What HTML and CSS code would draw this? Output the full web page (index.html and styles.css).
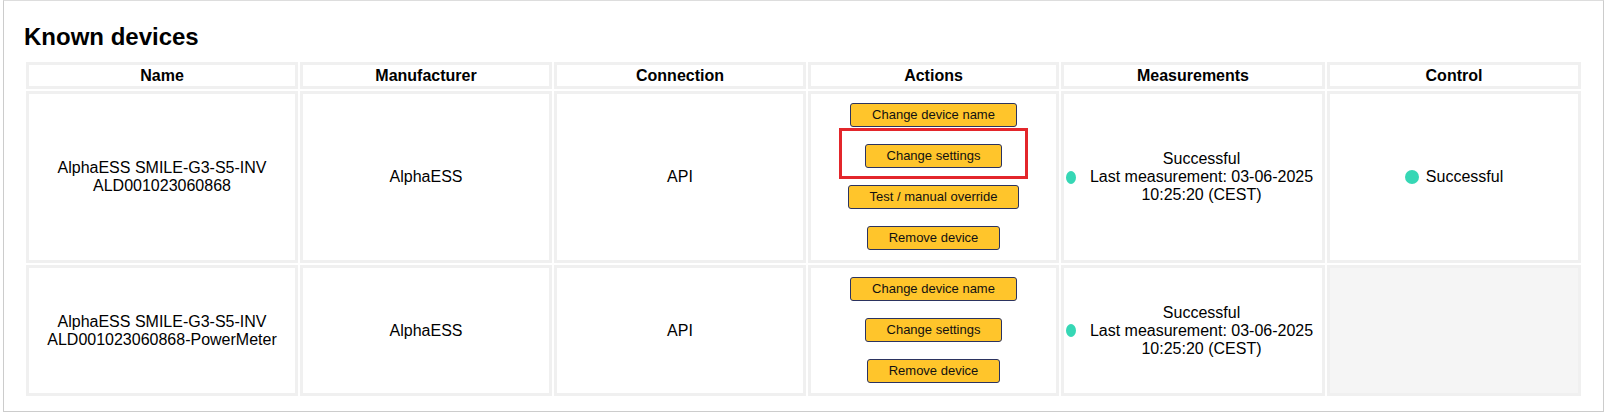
FILE: index.html
```html
<!DOCTYPE html>
<html lang="en">
<head>
<meta charset="utf-8">
<title>Known devices</title>
<link rel="stylesheet" href="styles.css">
</head>
<body>
<div class="panel">
  <h2 class="title">Known devices</h2>
  <table class="devices">
    <thead>
      <tr>
        <th class="c-name">Name</th>
        <th class="c-man">Manufacturer</th>
        <th class="c-conn">Connection</th>
        <th class="c-act">Actions</th>
        <th class="c-meas">Measurements</th>
        <th class="c-ctrl">Control</th>
      </tr>
    </thead>
    <tbody>
      <tr class="row-1">
        <td>AlphaESS SMILE-G3-S5-INV<br>ALD001023060868</td>
        <td>AlphaESS</td>
        <td>API</td>
        <td>
          <div class="actions">
            <button class="btn">Change device name</button>
            <span class="highlight"><button class="btn">Change settings</button></span>
            <button class="btn">Test / manual override</button>
            <button class="btn">Remove device</button>
          </div>
        </td>
        <td>
          <div class="meas">
            <span class="dot dot-narrow"></span>
            <div class="meas-text">
              <div>Successful</div>
              <div>Last measurement: 03-06-2025</div>
              <div>10:25:20 (CEST)</div>
            </div>
          </div>
        </td>
        <td>
          <div class="ctrl"><span class="dot"></span><span>Successful</span></div>
        </td>
      </tr>
      <tr class="row-2">
        <td>AlphaESS SMILE-G3-S5-INV<br>ALD001023060868-PowerMeter</td>
        <td>AlphaESS</td>
        <td>API</td>
        <td>
          <div class="actions">
            <button class="btn">Change device name</button>
            <button class="btn">Change settings</button>
            <button class="btn">Remove device</button>
          </div>
        </td>
        <td>
          <div class="meas">
            <span class="dot dot-narrow"></span>
            <div class="meas-text">
              <div>Successful</div>
              <div>Last measurement: 03-06-2025</div>
              <div>10:25:20 (CEST)</div>
            </div>
          </div>
        </td>
        <td class="empty"></td>
      </tr>
    </tbody>
  </table>
</div>
</body>
</html>
```

FILE: styles.css
```css
html, body {
  margin: 0;
  padding: 0;
  background: #ffffff;
}

body {
  font-family: "Liberation Sans", Arial, sans-serif;
  color: #000000;
}

.panel {
  margin: 0 3px;
  border: 1px solid #cccccc;
  border-top-color: #dddddd;
  padding: 22px 20px 11px 20px;
  height: 377px;
}

.title {
  margin: 0 0 9px 0;
  font-size: 24px;
  line-height: 28px;
  font-weight: bold;
}

.devices {
  width: 1559px;
  table-layout: fixed;
  border-collapse: separate;
  border-spacing: 2px;
}

.devices th,
.devices td {
  box-sizing: border-box;
  border: 3px solid #f0f0f0;
  padding: 1px;
  text-align: center;
  vertical-align: middle;
}

.devices th {
  font-size: 16px;
  line-height: 19px;
  font-weight: bold;
}

.devices td {
  font-size: 16px;
  line-height: 18px;
}

.c-name { width: 272px; }
.c-man { width: 252px; }
.c-conn { width: 252px; }
.c-act { width: 251px; }
.c-meas { width: 264px; }
.c-ctrl { width: 254px; }

.actions {
  display: flex;
  flex-direction: column;
  align-items: center;
  gap: 17px;
  padding: 8px 0 9px 0;
}

.btn {
  box-sizing: border-box;
  height: 24px;
  margin: 0;
  padding: 4px 21px;
  font-family: "Liberation Sans", Arial, sans-serif;
  font-size: 13px;
  line-height: 14px;
  color: #111111;
  background: #ffc52b;
  border: 1px solid #2b3360;
  border-radius: 3px;
  white-space: nowrap;
}

.highlight {
  position: relative;
  display: inline-flex;
}

.highlight::after {
  content: "";
  position: absolute;
  top: -16px;
  bottom: -11px;
  left: -26px;
  right: -26px;
  border: 3px solid #e3262b;
  pointer-events: none;
}

.meas {
  display: flex;
  align-items: center;
  padding-left: 1px;
}

.dot {
  display: inline-block;
  flex-shrink: 0;
  width: 14px;
  height: 14px;
  border-radius: 50%;
  background: #36d7b5;
}

.dot-narrow {
  width: 10px;
  height: 13px;
}

.meas-text {
  flex: 1;
  margin-left: 6px;
  text-align: center;
}

.ctrl {
  display: flex;
  align-items: center;
  justify-content: center;
  gap: 7px;
}

.empty {
  background: #f5f5f5;
}
```
